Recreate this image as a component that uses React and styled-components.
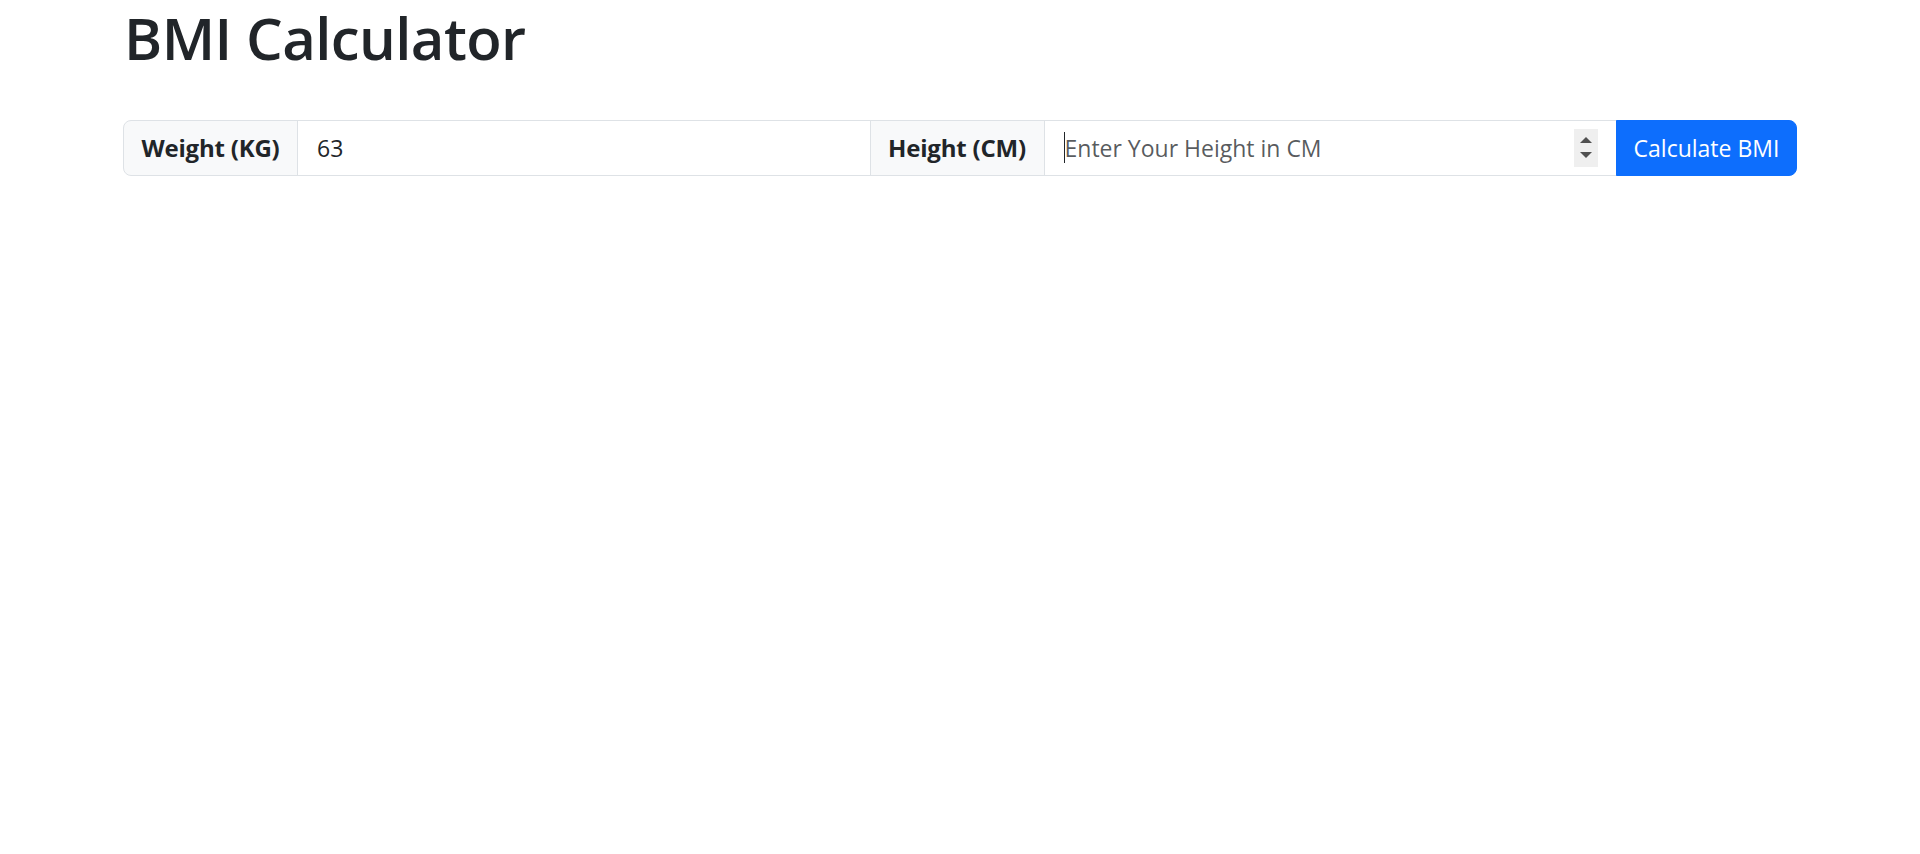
import React from "react";
import styled, { createGlobalStyle } from "styled-components";

const GlobalStyle = createGlobalStyle`
  * { box-sizing: border-box; }
  body {
    margin: 0;
    background: #fff;
    color: #212529;
    font-family: "Open Sans", "Noto Sans", Arial, sans-serif;
  }
`;

const App = () => {
  return (
    <>
      <GlobalStyle />
      <Container>
        <Title>BMI Calculator</Title>
        <InputGroup>
          <Label>Weight (KG)</Label>
          <Field>
            <Input type="text" defaultValue="63" />
          </Field>
          <Label>Height (CM)</Label>
          <Field>
            <Caret />
            <Input type="text" placeholder="Enter Your Height in CM" />
            <Spinner>
              <Arrow up />
              <Arrow />
            </Spinner>
          </Field>
          <Button>Calculate BMI</Button>
        </InputGroup>
      </Container>
    </>
  );
};

export default App;

const Container = styled.div`
  width: 1674px;
  margin: 0 auto;
`;

const Title = styled.h1`
  margin: 0;
  padding: 3px 0 0 1px;
  font-size: 58px;
  font-weight: 600;
  letter-spacing: -0.6px;
  line-height: 1.2;
  color: #212529;
  margin-bottom: 47px;
`;

const InputGroup = styled.div`
  display: flex;
  height: 56px;
`;

const Label = styled.span`
  flex: none;
  width: 175px;
  display: flex;
  align-items: center;
  justify-content: center;
  background: #f8f9fa;
  border: 1px solid #dee2e6;
  font-size: 24px;
  font-weight: 700;
  letter-spacing: -0.2px;
  color: #212529;
  margin-left: -1px;

  &:first-child {
    margin-left: 0;
    border-radius: 8px 0 0 8px;
  }
`;

const Field = styled.div`
  flex: 1;
  display: flex;
  align-items: center;
  border: 1px solid #dee2e6;
  margin-left: -1px;
  padding: 0 18px 0 19px;
  background: #fff;
`;

const Input = styled.input`
  flex: 1;
  min-width: 0;
  border: none;
  outline: none;
  padding: 0;
  font-family: inherit;
  font-size: 23px;
  color: #212529;
  background: transparent;

  &::placeholder {
    color: rgba(33, 37, 41, 0.75);
  }
`;

const Caret = styled.span`
  flex: none;
  width: 1px;
  height: 31px;
  background: #212529;
`;

const Spinner = styled.div`
  flex: none;
  width: 24px;
  height: 38px;
  background: #efefef;
  display: flex;
  flex-direction: column;
  align-items: center;
  justify-content: center;
  gap: 9px;
`;

const Arrow = styled.span`
  width: 0;
  height: 0;
  border-left: 6px solid transparent;
  border-right: 6px solid transparent;
  ${({ up }) =>
    up
      ? "border-bottom: 6px solid #505050;"
      : "border-top: 6px solid #505050;"}
`;

const Button = styled.button`
  flex: none;
  width: 181px;
  margin-left: -1px;
  border: 1px solid #0d6efd;
  background: #0d6efd;
  color: #fff;
  font-family: inherit;
  font-size: 23px;
  border-radius: 0 8px 8px 0;
  cursor: pointer;
`;
